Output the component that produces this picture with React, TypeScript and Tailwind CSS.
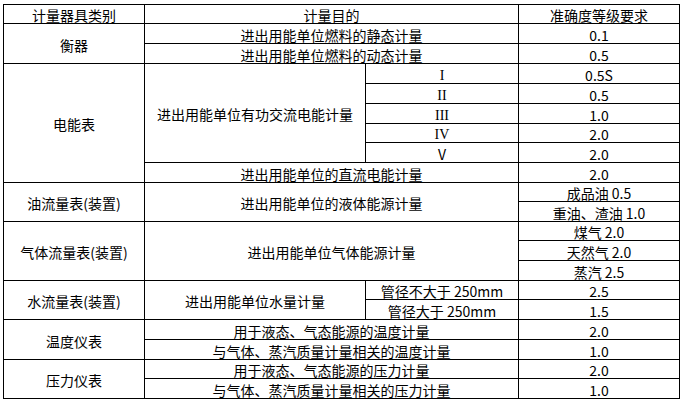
const cell = "border border-black p-0 pt-[3px] text-center align-middle";

const rowHeights = [19, 20, 20, 20, 20, 20, 19, 20, 20, 19, 20, 19, 20, 20, 19, 20, 20, 20, 19, 20];

function Roman({ children, serif = true }: { children: string; serif?: boolean }) {
  return (
    <span className={serif ? "font-['Liberation_Serif',serif] leading-none" : "leading-none"}>{children}</span>
  );
}

export default function App() {
  const h = (i: number) => ({ height: rowHeights[i] });
  return (
    <div className="w-[683px] h-[403px] overflow-hidden bg-white pl-[3px] pt-[4px] font-['Noto_Sans_CJK_SC',sans-serif] text-[14px] leading-[13px] text-black">
      <table className="table-fixed border-collapse w-[676px]">
        <colgroup>
          <col className="w-[141px]" />
          <col className="w-[221px]" />
          <col className="w-[153px]" />
          <col className="w-[161px]" />
        </colgroup>
        <tbody>
          <tr style={h(0)}>
            <td className={cell}>计量器具类别</td>
            <td className={cell} colSpan={2}>计量目的</td>
            <td className={cell}>准确度等级要求</td>
          </tr>
          <tr style={h(1)}>
            <td className={cell} rowSpan={2}>衡器</td>
            <td className={cell} colSpan={2}>进出用能单位燃料的静态计量</td>
            <td className={cell}>0.1</td>
          </tr>
          <tr style={h(2)}>
            <td className={cell} colSpan={2}>进出用能单位燃料的动态计量</td>
            <td className={cell}>0.5</td>
          </tr>
          <tr style={h(3)}>
            <td className={cell} rowSpan={6}>电能表</td>
            <td className={cell} rowSpan={5}>进出用能单位有功交流电能计量</td>
            <td className={cell}><Roman>I</Roman></td>
            <td className={cell}>0.5S</td>
          </tr>
          <tr style={h(4)}>
            <td className={cell}><Roman>II</Roman></td>
            <td className={cell}>0.5</td>
          </tr>
          <tr style={h(5)}>
            <td className={cell}><Roman>III</Roman></td>
            <td className={cell}>1.0</td>
          </tr>
          <tr style={h(6)}>
            <td className={cell}><Roman>IV</Roman></td>
            <td className={cell}>2.0</td>
          </tr>
          <tr style={h(7)}>
            <td className={cell}><Roman serif={false}>V</Roman></td>
            <td className={cell}>2.0</td>
          </tr>
          <tr style={h(8)}>
            <td className={cell} colSpan={2}>进出用能单位的直流电能计量</td>
            <td className={cell}>2.0</td>
          </tr>
          <tr style={h(9)}>
            <td className={cell} rowSpan={2}>油流量表(装置)</td>
            <td className={cell} colSpan={2} rowSpan={2}>进出用能单位的液体能源计量</td>
            <td className={cell}>成品油 0.5</td>
          </tr>
          <tr style={h(10)}>
            <td className={cell}>重油、渣油 1.0</td>
          </tr>
          <tr style={h(11)}>
            <td className={cell} rowSpan={3}>气体流量表(装置)</td>
            <td className={cell} colSpan={2} rowSpan={3}>进出用能单位气体能源计量</td>
            <td className={cell}>煤气 2.0</td>
          </tr>
          <tr style={h(12)}>
            <td className={cell}>天然气 2.0</td>
          </tr>
          <tr style={h(13)}>
            <td className={cell}>蒸汽 2.5</td>
          </tr>
          <tr style={h(14)}>
            <td className={cell} rowSpan={2}>水流量表(装置)</td>
            <td className={cell} rowSpan={2}>进出用能单位水量计量</td>
            <td className={cell}>管径不大于 250mm</td>
            <td className={cell}>2.5</td>
          </tr>
          <tr style={h(15)}>
            <td className={cell}>管径大于 250mm</td>
            <td className={cell}>1.5</td>
          </tr>
          <tr style={h(16)}>
            <td className={cell} rowSpan={2}>温度仪表</td>
            <td className={cell} colSpan={2}>用于液态、气态能源的温度计量</td>
            <td className={cell}>2.0</td>
          </tr>
          <tr style={h(17)}>
            <td className={cell} colSpan={2}>与气体、蒸汽质量计量相关的温度计量</td>
            <td className={cell}>1.0</td>
          </tr>
          <tr style={h(18)}>
            <td className={cell} rowSpan={2}>压力仪表</td>
            <td className={cell} colSpan={2}>用于液态、气态能源的压力计量</td>
            <td className={cell}>2.0</td>
          </tr>
          <tr style={h(19)}>
            <td className={cell} colSpan={2}>与气体、蒸汽质量计量相关的压力计量</td>
            <td className={cell}>1.0</td>
          </tr>
        </tbody>
      </table>
    </div>
  );
}
